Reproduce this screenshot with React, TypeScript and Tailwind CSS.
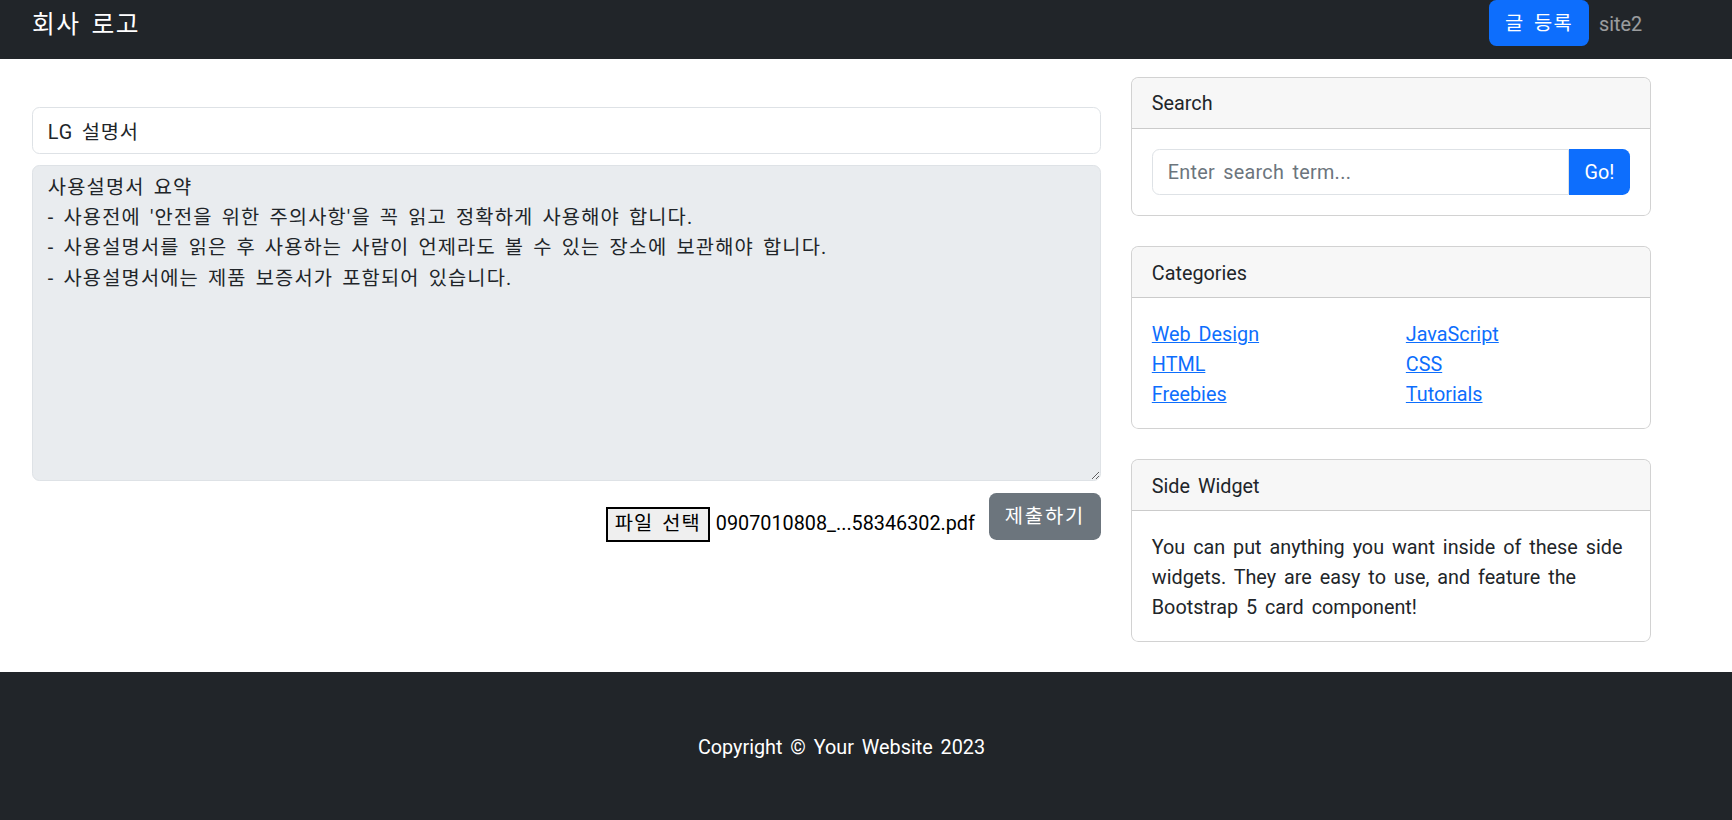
import { useState } from 'react';

const body = `사용설명서 요약
- 사용전에 '안전을 위한 주의사항'을 꼭 읽고 정확하게 사용해야 합니다.
- 사용설명서를 읽은 후 사용하는 사람이 언제라도 볼 수 있는 장소에 보관해야 합니다.
- 사용설명서에는 제품 보증서가 포함되어 있습니다.`;

const categories = [
  ['Web Design', 'HTML', 'Freebies'],
  ['JavaScript', 'CSS', 'Tutorials'],
];

function Card({ title, children, textBody }: { title: string; children: React.ReactNode; textBody?: boolean }) {
  return (
    <div className="mb-[30.5px] rounded-[7.4px] border border-[rgba(0,0,0,0.175)] bg-white">
      <div className="rounded-t-[7.4px] border-b border-[rgba(0,0,0,0.175)] bg-[#f7f7f7] px-[19.8px] pt-[11.4px] pb-[8.4px]">
        {title}
      </div>
      <div className={textBody ? 'px-[19.8px] pt-[22px] pb-[17.6px]' : 'p-[19.8px]'}>{children}</div>
    </div>
  );
}

export default function App() {
  const [title, setTitle] = useState('LG 설명서');
  const [content, setContent] = useState(body);

  return (
    <div className="min-h-screen bg-white text-[19.8px] leading-[30px] text-[#212529] [word-spacing:3px] font-['Roboto','Noto_Sans_CJK_KR',sans-serif]">
      {/* Navbar */}
      <nav className="h-[59px] bg-[#212529]">
        <div className="flex w-[1652px] items-start justify-between pl-[32px]">
          <a href="#" className="flex h-[46px] items-center pt-[4px] text-[24.75px] tracking-[1.6px] text-white">
            회사 로고
          </a>
          <div className="flex items-start">
            <button className="h-[46px] rounded-[7.4px] bg-[#0d6efd] px-[15.85px] pt-[2px] tracking-[1.45px] text-white [word-spacing:3px]">
              글 등록
            </button>
            <a href="#" className="flex h-[48px] items-center px-[9.9px] pt-[2px] text-white/55">
              site2
            </a>
          </div>
        </div>
      </nav>

      {/* Main */}
      <div className="flex gap-[30px] pl-[32px] pt-[18px]">
        <div className="w-[1069px] pt-[30px]">
          <input
            value={title}
            onChange={(e) => setTitle(e.target.value)}
            className="mb-[11px] block h-[46.5px] w-full rounded-[7.4px] border border-[#dee2e6] px-[14.85px] tracking-[0.8px] outline-none [word-spacing:3px]"
          />
          <textarea
            readOnly
            value={content}
            onChange={(e) => setContent(e.target.value)}
            className="block h-[316px] w-full rounded-[7.4px] border border-[#dee2e6] bg-[#e9ecef] px-[14.85px] py-[7.4px] leading-[30.3px] tracking-[1.15px] outline-none [word-spacing:3px]"
          />
          <div className="mt-[12.5px] flex items-end justify-end">
            <div className="mb-[-2px] mr-[14px] flex items-center">
              <span className="flex h-[35px] items-center border-2 border-black bg-[#efefef] px-[7px] tracking-[1.1px] text-black">
                파일 선택
              </span>
              <span className="ml-[6px] text-black [word-spacing:0px]">0907010808_...58346302.pdf</span>
            </div>
            <button className="h-[46.5px] rounded-[7.4px] bg-[#6c757d] px-[15.85px] pt-[1px] tracking-[1.9px] text-white">
              제출하기
            </button>
          </div>
        </div>

        {/* Sidebar */}
        <aside className="w-[520px]">
          <Card title="Search">
            <div className="flex">
              <input
                placeholder="Enter search term..."
                className="h-[46.5px] min-w-0 flex-1 rounded-l-[7.4px] border border-[#dee2e6] px-[14.85px] pt-[2px] tracking-[0.3px] outline-none [word-spacing:3px] placeholder:text-[#6c757d]"
              />
              <button className="h-[46.5px] rounded-r-[7.4px] bg-[#0d6efd] px-[15.85px] pt-[2px] text-white">
                Go!
              </button>
            </div>
          </Card>
          <Card title="Categories" textBody>
            <div className="grid grid-cols-2 gap-x-[29.7px]">
              {categories.map((col, i) => (
                <ul key={i}>
                  {col.map((c) => (
                    <li key={c}>
                      <a href="#" className="text-[#0d6efd] underline">
                        {c}
                      </a>
                    </li>
                  ))}
                </ul>
              ))}
            </div>
          </Card>
          <Card title="Side Widget" textBody>
            You can put anything you want inside of these side
            <br />
            widgets. They are easy to use, and feature the
            <br />
            Bootstrap 5 card component!
          </Card>
        </aside>
      </div>

      {/* Footer */}
      <footer className="bg-[#212529] pt-[61px] pb-[57.4px]">
        <p className="w-[1683px] text-center text-white">Copyright © Your Website 2023</p>
      </footer>
    </div>
  );
}
